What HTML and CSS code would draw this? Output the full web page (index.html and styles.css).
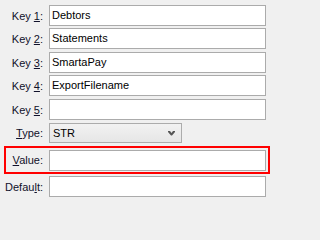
FILE: index.html
```html
<!DOCTYPE html>
<html>
<head>
<meta charset="utf-8">
<link rel="stylesheet" href="styles.css">
</head>
<body>
<div class="form">
  <div class="row r1"><label class="lbl">Key <u>1</u>:</label><div class="field">Debtors</div></div>
  <div class="row r2"><label class="lbl">Key <u>2</u>:</label><div class="field">Statements</div></div>
  <div class="row r3"><label class="lbl">Key <u>3</u>:</label><div class="field">SmartaPay</div></div>
  <div class="row r2"><label class="lbl">Key <u>4</u>:</label><div class="field">ExportFilename</div></div>
  <div class="row r3"><label class="lbl">Key <u>5</u>:</label><div class="field"></div></div>
  <div class="row r3 sel-row"><label class="lbl"><u>T</u>ype:</label>
    <div class="select"><span>STR</span>
      <svg class="chev" width="7" height="5" viewBox="0 0 7 5"><path d="M0 0h2l1.5 2L5 0h2v1L4 4.5H3L0 1z" fill="#555"/></svg>
    </div>
  </div>
  <div class="row highlight"><label class="lbl"><u>V</u>alue:</label><div class="field"></div></div>
  <div class="row r2"><label class="lbl">Defau<u>l</u>t:</label><div class="field"></div></div>
</div>
</body>
</html>
```
FILE: styles.css
```css
html, body {
  margin: 0;
  padding: 0;
  background: #f0f0f0;
}
body {
  font-family: "Liberation Sans", Arial, sans-serif;
  font-size: 11px;
  color: #000;
  width: 271px;
  height: 202px;
  overflow: hidden;
}
.form {
  display: flex;
  flex-direction: column;
  padding-top: 5px;
}
.row {
  display: flex;
  align-items: center;
  height: 21px;
}
.r2 { margin-top: 2px; }
.r3 { margin-top: 3px; }
.lbl {
  width: 43px;
  margin-right: 6px;
  text-align: right;
  color: #10102a;
  white-space: nowrap;
}
.lbl u {
  text-decoration-thickness: 1px;
  text-underline-offset: 1px;
}
.field {
  box-sizing: border-box;
  width: 217px;
  height: 21px;
  border: 1px solid #ababab;
  background: #fff;
  padding: 0 0 0 2px;
  line-height: 19px;
  white-space: nowrap;
}
.sel-row { height: 20px; }
.select {
  box-sizing: border-box;
  width: 133px;
  height: 20px;
  border: 1px solid #acacac;
  background: linear-gradient(#f2f2f2, #e6e6e6);
  display: flex;
  align-items: center;
  justify-content: space-between;
  padding: 0 6px 0 3px;
}
.chev { display: block; margin-top: 1px; }
.highlight {
  box-sizing: border-box;
  margin-top: 3px;
  margin-left: 4px;
  width: 266px;
  height: 28px;
  border: 2px solid #ff0000;
  align-items: flex-start;
  padding-top: 2px;
}
.highlight .lbl {
  width: 37px;
  line-height: 21px;
}
.highlight + .row { margin-top: 2px; }
```
